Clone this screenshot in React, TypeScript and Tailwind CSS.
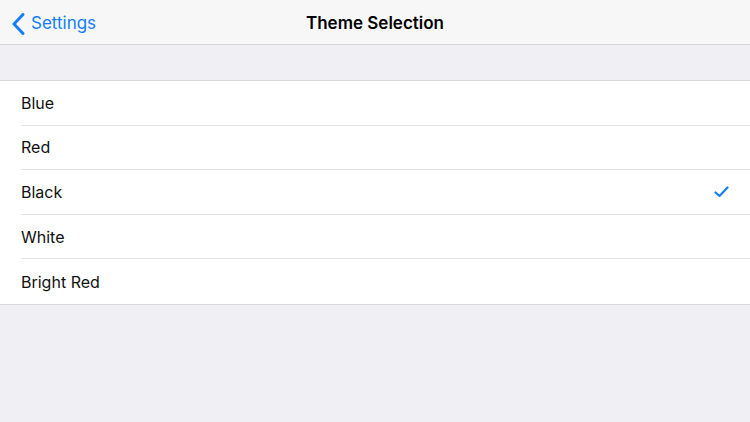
import { useState } from "react";

const themes = ["Blue", "Red", "Black", "White", "Bright Red"];

export default function App() {
  const [selected, setSelected] = useState("Black");

  return (
    <div className="h-[422px] w-[750px] bg-[#efeff4] font-['Inter','Liberation_Sans',sans-serif] antialiased">
      {/* Nav bar */}
      <div className="relative flex h-[45px] items-center border-b border-[#d6d6da] bg-[#f7f7f7] pt-[3px]">
        <button className="flex items-center gap-[6px] pl-[12px] text-[17px] text-[#147efb]">
          <svg width="13" height="22" viewBox="0 0 13 22" fill="none">
            <path d="M11 1.5 L2 11 L11 20.5" stroke="#147efb" strokeWidth="3" strokeLinecap="round" strokeLinejoin="round" />
          </svg>
          <span>Settings</span>
        </button>
        <div className="pointer-events-none absolute inset-x-0 top-[3px] flex h-[42px] items-center justify-center">
          <span className="text-[17px] font-semibold text-black">Theme Selection</span>
        </div>
      </div>

      {/* List */}
      <div className="mt-[35px] border-y border-[#d9d9dd] bg-white">
        {themes.map((t, i) => (
          <div
            key={t}
            onClick={() => setSelected(t)}
            className="flex h-[44.6px] cursor-pointer items-center pl-[21px]"
          >
            <div
              className={`flex h-full flex-1 items-center pr-[21px] ${
                i < themes.length - 1 ? "border-b border-[#e3e3e6]" : ""
              }`}
            >
              <span className="flex-1 text-[16px] text-[#111]">{t}</span>
              {selected === t && (
                <svg width="15" height="12" viewBox="0 0 15 12" fill="none">
                  <path d="M1.5 6.5 L5.5 10 L13.5 1.5" stroke="#147efb" strokeWidth="2.2" strokeLinecap="round" strokeLinejoin="round" />
                </svg>
              )}
            </div>
          </div>
        ))}
      </div>
    </div>
  );
}
